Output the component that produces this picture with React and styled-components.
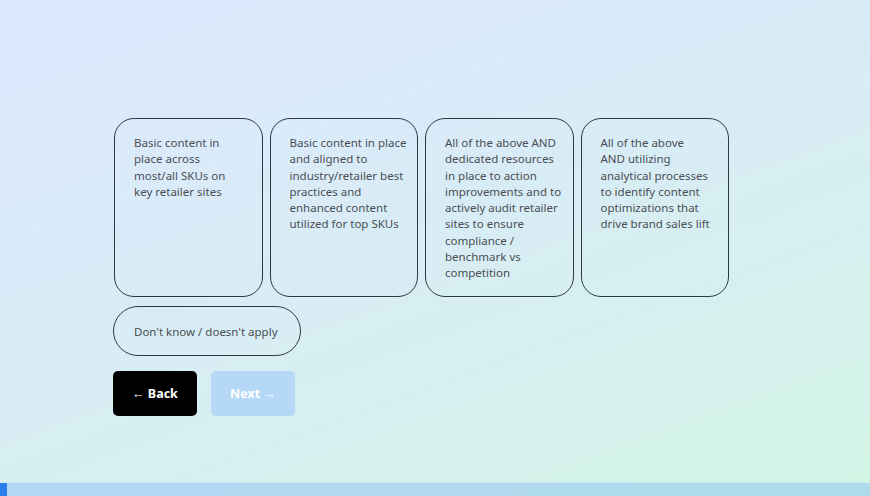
import React from 'react'
import styled, { createGlobalStyle } from 'styled-components'

const GlobalStyle = createGlobalStyle`
  html, body {
    margin: 0;
    padding: 0;
  }
  body {
    font-family: 'Noto Sans', 'Open Sans', sans-serif;
  }
`

const Page = styled.div`
  position: relative;
  width: 870px;
  height: 496px;
  overflow: hidden;
  background: linear-gradient(160deg, #dde8fe 0%, #d8ecf6 45%, #d2f5e5 100%);
  display: flex;
  flex-direction: column;
`

const Main = styled.main`
  flex: 1;
  padding: 118px 0 0 113px;
  display: flex;
  flex-direction: column;
`

const Options = styled.div`
  display: flex;
  gap: 7px;
  padding-left: 1px;
`

const Card = styled.button`
  box-sizing: border-box;
  width: 148.5px;
  height: 179px;
  padding: 16px 10px 0 19px;
  border: 1px solid #2d3a40;
  border-radius: 20px;
  background: transparent;
  text-align: left;
  display: flex;
  flex-direction: column;
  align-items: flex-start;
  font-family: inherit;
  font-size: 11.5px;
  line-height: 16.3px;
  color: #4b4e53;
  cursor: pointer;
`

const Line = styled.span`
  display: block;
  white-space: nowrap;
`

const Pill = styled.button`
  box-sizing: border-box;
  align-self: flex-start;
  margin-top: 9px;
  width: 188px;
  height: 50px;
  padding: 0 0 0 20px;
  text-align: left;
  border: 1px solid #2d3a40;
  border-radius: 25px;
  background: transparent;
  font-family: inherit;
  font-size: 11.5px;
  color: #4b4e53;
  cursor: pointer;
`

const Nav = styled.div`
  display: flex;
  gap: 14px;
  margin-top: 15px;
`

const NavButton = styled.button`
  box-sizing: border-box;
  width: 84px;
  height: 45px;
  border: none;
  border-radius: 5px;
  font-family: inherit;
  font-size: 12.5px;
  font-weight: 700;
  color: #fff;
  background: ${p => (p.disabled ? '#b5d8f6' : '#000')};
  cursor: ${p => (p.disabled ? 'default' : 'pointer')};
`

const Progress = styled.div`
  height: 13px;
  border-top: 1px solid #cfe9f7;
  background: linear-gradient(90deg, #b4d6f5 0%, #aedcea 100%);
`

const Fill = styled.div`
  height: 100%;
  background: #2b7de9;
`

const options = [
  ['Basic content in', 'place across', 'most/all SKUs on', 'key retailer sites'],
  [
    'Basic content in place',
    'and aligned to',
    'industry/retailer best',
    'practices and',
    'enhanced content',
    'utilized for top SKUs',
  ],
  [
    'All of the above AND',
    'dedicated resources',
    'in place to action',
    'improvements and to',
    'actively audit retailer',
    'sites to ensure',
    'compliance /',
    'benchmark vs',
    'competition',
  ],
  [
    'All of the above',
    'AND utilizing',
    'analytical processes',
    'to identify content',
    'optimizations that',
    'drive brand sales lift',
  ],
]

export default function App() {
  return (
    <Page>
      <GlobalStyle />
      <Main>
        <Options>
          {options.map(lines => (
            <Card key={lines[0] + lines.length}>
              {lines.map(l => (
                <Line key={l}>{l}</Line>
              ))}
            </Card>
          ))}
        </Options>
        <Pill>Don't know / doesn't apply</Pill>
        <Nav>
          <NavButton>← Back</NavButton>
          <NavButton disabled>Next →</NavButton>
        </Nav>
      </Main>
      <Progress>
        <Fill style={{ width: `${(1 / 120) * 100}%` }} />
      </Progress>
    </Page>
  )
}
